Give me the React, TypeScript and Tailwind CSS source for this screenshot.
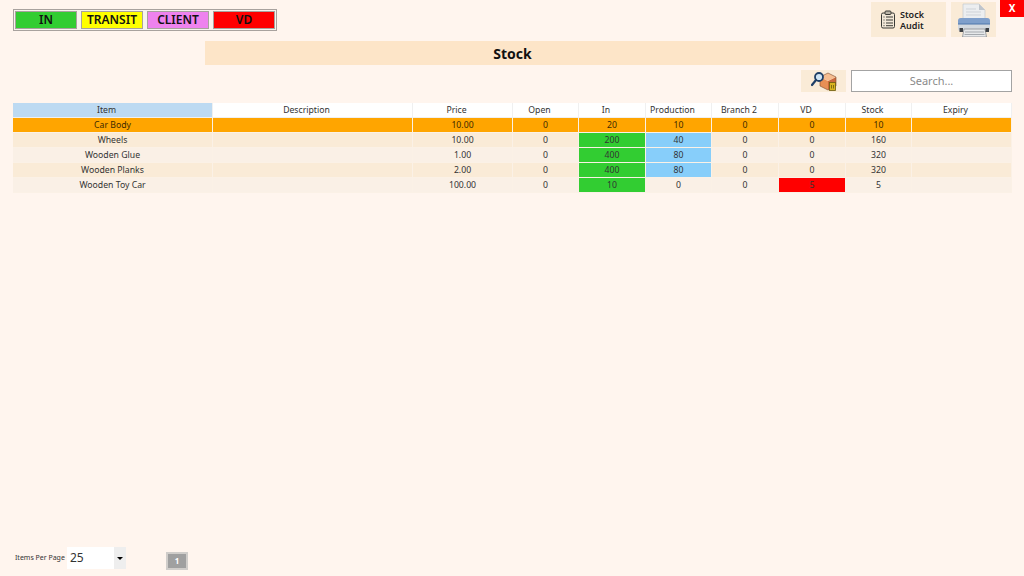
import React from "react";

const columns = ["Item", "Description", "Price", "Open", "In", "Production", "Branch 2", "VD", "Stock", "Expiry"];

interface Row {
  item: string;
  price: string;
  open: string;
  inQty: string;
  production: string;
  branch: string;
  vd: string;
  stock: string;
}

const rows: Row[] = [
  { item: "Car Body", price: "10.00", open: "0", inQty: "20", production: "10", branch: "0", vd: "0", stock: "10" },
  { item: "Wheels", price: "10.00", open: "0", inQty: "200", production: "40", branch: "0", vd: "0", stock: "160" },
  { item: "Wooden Glue", price: "1.00", open: "0", inQty: "400", production: "80", branch: "0", vd: "0", stock: "320" },
  { item: "Wooden Planks", price: "2.00", open: "0", inQty: "400", production: "80", branch: "0", vd: "0", stock: "320" },
  { item: "Wooden Toy Car", price: "100.00", open: "0", inQty: "10", production: "0", branch: "0", vd: "5", stock: "5" },
];

const gridCols = "grid grid-cols-[200px_200px_100px_66px_67px_66px_67px_67px_66px_100px]";

function Chip({ label, color }: { label: string; color: string }) {
  return (
    <div className={`w-[62px] h-[18px] border border-[#a8a29e] flex items-center justify-center text-[12px] font-semibold text-[#111] ${color}`}>
      {label}
    </div>
  );
}

function Cell({ children, bg }: { children?: React.ReactNode; bg?: string }) {
  return (
    <div className={`h-[15px] pt-[2px] flex items-center justify-center border-r border-b border-[#fbf1e6] ${bg ?? ""}`}>
      {children}
    </div>
  );
}

function ClipboardIcon() {
  return (
    <svg width="16" height="19" viewBox="0 0 16 19" fill="none" stroke="#3a3a36" strokeWidth="1">
      <rect x="1.5" y="3" width="13" height="15" rx="1.5" fill="#f2e8d8" />
      <rect x="5" y="1" width="6" height="3.5" rx="1" fill="#b9b3a6" />
      <path d="M3.5 7h1M6 7h7M3.5 10h1M6 10h7M3.5 13h1M6 13h7M3.5 15.7h1M6 15.7h7" />
    </svg>
  );
}

function PrinterIcon() {
  return (
    <svg width="34" height="34" viewBox="0 0 34 34">
      <path d="M6 1h16l6 6v10H6z" fill="#eceef0" stroke="#c3c8ce" strokeWidth="0.7" />
      <path d="M22 1v6h6z" fill="#bfc5cc" />
      <path d="M9 6h10M9 9h15M9 12h15" stroke="#cfd3d8" strokeWidth="1" />
      <path d="M1 18q0-3 3-3h26q3 0 3 3v8q0 2-2 2H3q-2 0-2-2z" fill="#d4d9df" />
      <path d="M1 18q0-3 3-3h26q3 0 3 3v3H1z" fill="#7f9fcb" />
      <path d="M1 21h32" stroke="#4f76ab" strokeWidth="1" />
      <path d="M7 26h21l1.500 8H5.500z" fill="#e6e8ea" stroke="#8a8e93" strokeWidth="0.8" />
      <path d="M8 29h19M7.500 31.500h20" stroke="#a5a9ae" strokeWidth="1" />
      <rect x="2.500" y="25" width="3.500" height="4" fill="#3f4246" />
      <rect x="28.500" y="25" width="3.500" height="4" fill="#3f4246" />
    </svg>
  );
}

function BoxSearchIcon() {
  return (
    <svg width="26" height="20" viewBox="0 0 26 20">
      <path d="M9 6l8 4v9l-8-4z" fill="#e88f55" />
      <path d="M17 10l8-4v9l-8 4z" fill="#c9683c" />
      <path d="M9 6l8-4 8 4-8 4z" fill="#f6bd90" />
      <path d="M9 6l8-4 8 4v9l-8 4-8-4z" fill="none" stroke="#7a4a2c" strokeWidth="0.6" />
      <circle cx="8" cy="6" r="4" fill="#cfe4f4" stroke="#1f3f66" strokeWidth="1.8" />
      <path d="M5 9l-4 5" stroke="#1f3f66" strokeWidth="2.2" strokeLinecap="round" />
      <rect x="18.500" y="11.500" width="6" height="8" fill="#d9b41f" stroke="#6b5a10" strokeWidth="0.8" />
      <path d="M20.500 14v3.500M22.500 14v3.500" stroke="#6b5a10" strokeWidth="0.8" />
    </svg>
  );
}

export default function App() {
  return (
    <div className="relative w-[1024px] h-[576px] overflow-hidden bg-[#fff5ee] flex flex-col text-[#333] font-['Noto_Sans','Open_Sans',sans-serif]">
      <button className="absolute right-0 top-0 w-[24px] h-[17px] bg-[#ff0000] text-white text-[10px] font-bold flex items-center justify-center">
        X
      </button>

      {/* top strip */}
      <div className="h-[41px] flex items-start justify-between pl-[13px] pr-[28px]">
        <div className="mt-[9px] w-[264px] h-[22px] border border-[#a8a29e] bg-[#f7f3ee] flex items-center gap-[4px] pl-[1px]">
          <Chip label="IN" color="bg-[#32cd32]" />
          <Chip label="TRANSIT" color="bg-[#ffff00]" />
          <Chip label="CLIENT" color="bg-[#ee82ee]" />
          <Chip label="VD" color="bg-[#ff0000]" />
        </div>
        <div className="mt-[2px] flex gap-[5px]">
          <div className="w-[75px] h-[35px] bg-[#faebd7] flex items-center pl-[9px] gap-[4px]">
            <ClipboardIcon />
            <div className="text-[9px] leading-[11px] font-semibold text-[#222]">
              Stock
              <br />
              Audit
            </div>
          </div>
          <div className="w-[45px] h-[35px] bg-[#faebd7] flex items-center justify-center">
            <PrinterIcon />
          </div>
        </div>
      </div>

      {/* title */}
      <div className="ml-[205px] w-[615px] h-[24px] bg-[#fde5c8] flex items-center justify-center text-[14px] font-bold text-[#111]">
        Stock
      </div>

      {/* search */}
      <div className="mt-[5px] h-[22px] flex justify-end gap-[5px] pr-[12px]">
        <div className="w-[45px] h-[22px] bg-[#faebd7] flex items-center justify-center">
          <BoxSearchIcon />
        </div>
        <div className="w-[161px] h-[22px] border border-[#a3a3a3] bg-white flex items-center justify-center text-[11px] text-[#8a8a8a]">
          Search...
        </div>
      </div>

      {/* table */}
      <div className="mt-[11px] ml-[13px] w-[999px] text-[8.7px]">
        <div className={gridCols}>
          {columns.map((c, i) => (
            <div
              key={c}
              className={`h-[15px] pt-[2px] flex items-center justify-center pr-[12px] border-r border-b border-[#f0f0f0] ${i === 0 ? "bg-[#bddaf2]" : "bg-white"}`}
            >
              {c}
            </div>
          ))}
        </div>
        {rows.map((r, idx) => {
          const rowBg = idx === 0 ? "bg-[#ffa500]" : idx % 2 === 1 ? "bg-[#faebd7]" : "bg-[#faf0e6]";
          const colored = idx > 0;
          const inBg = colored ? "bg-[#32cd32]" : undefined;
          const prodBg = colored && r.production !== "0" ? "bg-[#87cefa]" : undefined;
          const vdBg = r.vd !== "0" ? "bg-[#ff0000]" : undefined;
          return (
            <div key={r.item} className={`${gridCols} ${rowBg} ${idx === 0 ? "text-[#3d2a00]" : ""}`}>
              <Cell>{r.item}</Cell>
              <Cell />
              <Cell>{r.price}</Cell>
              <Cell>{r.open}</Cell>
              <Cell bg={inBg}>{r.inQty}</Cell>
              <Cell bg={prodBg}>{r.production}</Cell>
              <Cell>{r.branch}</Cell>
              <Cell bg={vdBg}>{r.vd}</Cell>
              <Cell>{r.stock}</Cell>
              <Cell />
            </div>
          );
        })}
      </div>

      {/* footer */}
      <div className="mt-auto mb-[6px] ml-[15px] h-[24px] flex items-center">
        <span className="text-[7px] w-[52px] text-[#333]">Items Per Page</span>
        <div className="w-[59px] h-[22px] bg-white flex items-center justify-between">
          <span className="ml-[3px] text-[12px] text-[#333]">25</span>
          <div className="w-[12px] h-[22px] bg-[#eeeeee] flex items-center justify-center">
            <div className="w-0 h-0 border-l-[3px] border-r-[3px] border-t-[3px] border-l-transparent border-r-transparent border-t-black" />
          </div>
        </div>
        <div className="ml-[40px] mt-[5px] w-[22px] h-[18px] border-2 border-[#d0cdca] bg-[#a0a0a0] flex items-center justify-center text-white text-[8px] font-bold">
          1
        </div>
      </div>
    </div>
  );
}
